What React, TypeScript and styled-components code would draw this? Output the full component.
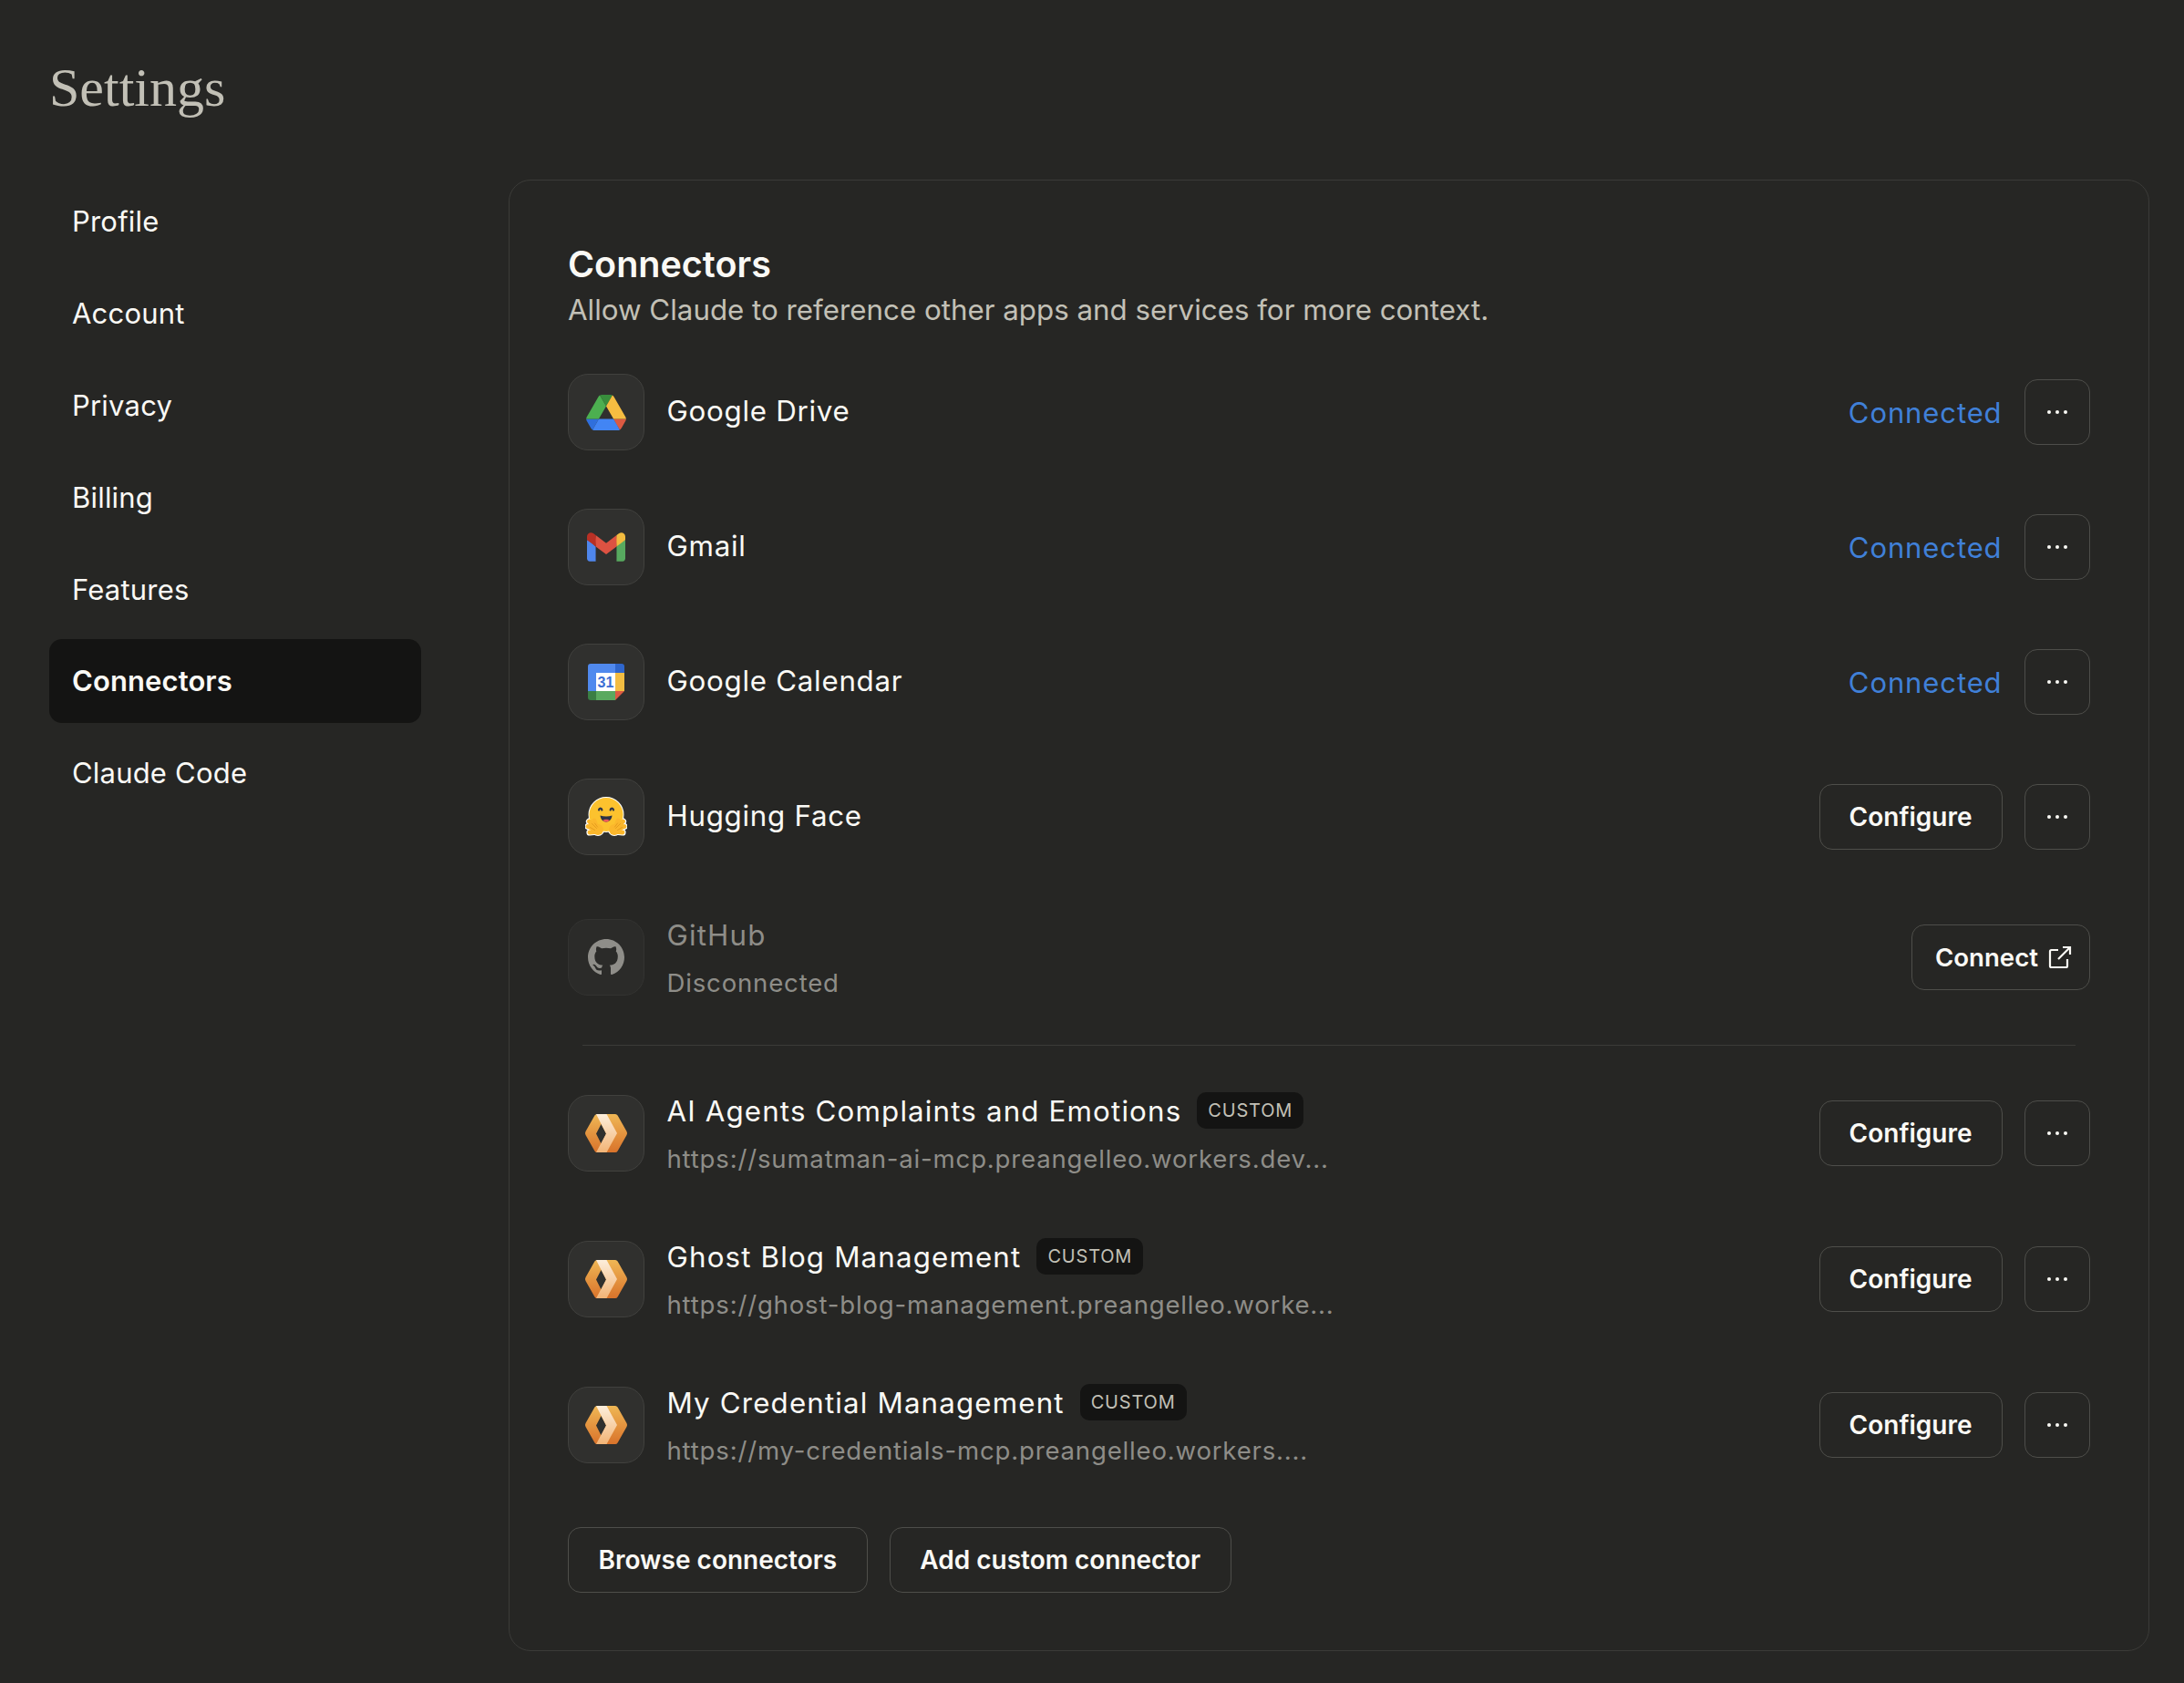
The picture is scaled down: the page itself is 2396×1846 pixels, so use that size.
import React from "react";
import styled, { createGlobalStyle } from "styled-components";

const Global = createGlobalStyle`
  html, body { margin: 0; padding: 0; background: #262624; }
  body { font-family: Inter, "Liberation Sans", sans-serif; color: #faf9f5; }
  * { box-sizing: border-box; }
`;

const Page = styled.div`
  width: 2396px;
  height: 1846px;
  background: #262624;
  padding: 56px 39px 0 54px;
  overflow: hidden;
`;
const Title = styled.h1`
  margin: 0;
  height: 80px;
  line-height: 80px;
  font-family: "Liberation Serif", serif;
  font-weight: 400;
  font-size: 60px;
  color: #c2c0b6;
`;
const Body = styled.div`
  display: flex;
  align-items: flex-start;
  margin-top: 61px;
  gap: 96px;
`;
const Sidebar = styled.nav`
  width: 408px;
  flex: none;
  display: flex;
  flex-direction: column;
  gap: 9px;
`;
const NavItem = styled.div<{ $active?: boolean }>`
  height: 91.8px;
  display: flex;
  align-items: center;
  padding-left: 25px;
  border-radius: 14px;
  font-size: 31px;
  letter-spacing: ${(p) => (p.$active ? "0.1px" : "0.2px")};
  font-weight: ${(p) => (p.$active ? 600 : 400)};
  background: ${(p) => (p.$active ? "#141413" : "transparent")};
  color: #faf9f5;
`;
const Panel = styled.section`
  width: 1800px;
  flex: none;
  border: 1.5px solid #3b3b38;
  border-radius: 24px;
  padding: 63px 64.5px 63px 64px;
  display: flex;
  flex-direction: column;
`;
const Heading = styled.h2`
  margin: 0;
  height: 56px;
  line-height: 58px;
  font-size: 39.5px;
  font-weight: 600;
  color: #faf9f5;
`;
const Sub = styled.p`
  margin: 0 0 47px;
  height: 46px;
  line-height: 46px;
  font-size: 31.3px;
  color: #c2c0b6;
`;
const List = styled.div`
  display: flex;
  flex-direction: column;
  gap: 64px;
`;
const Row = styled.div<{ $two?: boolean }>`
  display: flex;
  align-items: center;
  height: ${(p) => (p.$two ? 96 : 84)}px;
  gap: 24px;
`;
const IconBox = styled.div<{ $dim?: boolean }>`
  width: 84px;
  height: 84px;
  flex: none;
  border-radius: 22px;
  display: flex;
  align-items: center;
  justify-content: center;
  background: ${(p) => (p.$dim ? "#2b2b29" : "#30302e")};
  border: 1.5px solid ${(p) => (p.$dim ? "#333331" : "#41413e")};
`;
const Info = styled.div`
  flex: 1;
  min-width: 0;
  margin: 0 0 2px 0.5px;
  display: flex;
  flex-direction: column;
`;
const NameLine = styled.div`
  display: flex;
  align-items: center;
  gap: 17px;
  height: 46px;
  margin-top: 4.5px;
`;
const Name = styled.span<{ $dim?: boolean }>`
  font-size: 31.3px;
  letter-spacing: 0.72px;
  color: ${(p) => (p.$dim ? "#8e8d88" : "#faf9f5")};
  ${NameLine} & {
    letter-spacing: 1.15px;
  }
`;
const Tag = styled.span`
  height: 40px;
  margin-top: -2px;
  padding: 0 12px;
  display: inline-flex;
  align-items: center;
  border-radius: 10px;
  background: #141413;
  color: #c2c0b6;
  font-size: 20px;
  letter-spacing: 0.8px;
`;
const Detail = styled.div`
  height: 44px;
  margin-top: 7px;
  line-height: 44px;
  font-size: 27.6px;
  letter-spacing: 0.8px;
  color: #8e8d88;
  white-space: nowrap;
`;
const Status = styled.span`
  font-size: 31px;
  letter-spacing: 0.9px;
  color: #4080d8;
`;
const Button = styled.button`
  height: 72px;
  padding: 0 32px;
  background: transparent;
  border: 1.5px solid #4e4e4a;
  border-radius: 14px;
  color: #faf9f5;
  font-family: inherit;
  font-size: 28px;
  font-weight: 600;
  display: inline-flex;
  align-items: center;
  flex: none;
`;
const ConnectButton = styled(Button)`
  padding: 0 19px 0 24.5px;
  gap: 10.5px;
  font-size: 27.6px;
`;
const MoreButton = styled(Button)`
  width: 72px;
  padding: 0;
  justify-content: center;
`;
const Divider = styled.hr`
  margin: -16px 16px;
  height: 1px;
  border: none;
  background: #3b3b38;
`;
const Footer = styled.div`
  display: flex;
  gap: 24px;
  margin-top: 64px;
`;
const FooterButton = styled(Button)`
  padding: 0 32.5px;
`;

const Dots = () => (
  <svg width="24" height="6" viewBox="0 0 24 6" fill="#faf9f5">
    <circle cx="3" cy="3" r="2" />
    <circle cx="12" cy="3" r="2" />
    <circle cx="21" cy="3" r="2" />
  </svg>
);

const External = () => (
  <svg width="26" height="26" viewBox="0 0 26 26" fill="none" stroke="#faf9f5" strokeWidth="2.2">
    <path d="M11 5H3.500a1.500 1.500 0 0 0-1.500 1.500v16A1.500 1.500 0 0 0 3.500 24h16a1.500 1.500 0 0 0 1.500-1.500V15" />
    <path d="M11 15 24 2M16 2h8v8" />
  </svg>
);

const Drive = () => (
  <svg width="44" height="39" viewBox="0 0 87.3 78">
    <path d="m6.600 66.850 3.850 6.650c.8 1.400 1.950 2.500 3.300 3.300l13.750-23.800h-27.500c0 1.550.4 3.100 1.200 4.500z" fill="#2f6fdc" />
    <path d="m43.650 25-13.750-23.800c-1.350.8-2.500 1.900-3.300 3.300l-25.400 44a9.060 9.060 0 0 0 -1.200 4.500h27.500z" fill="#4caf50" />
    <path d="m73.550 76.800c1.350-.8 2.500-1.900 3.300-3.300l1.600-2.750 7.650-13.250c.8-1.400 1.200-2.950 1.200-4.500h-27.502l5.852 11.500z" fill="#dc5a42" />
    <path d="m43.650 25 13.750-23.800c-1.350-.8-2.900-1.200-4.500-1.200h-18.500c-1.600 0-3.150.45-4.500 1.200z" fill="#388e3c" />
    <path d="m59.800 53h-32.300l-13.750 23.800c1.350.8 2.900 1.200 4.500 1.200h50.800c1.600 0 3.150-.45 4.500-1.200z" fill="#4285f4" />
    <path d="m73.400 26.500-12.700-22c-.8-1.400-1.950-2.500-3.300-3.300l-13.750 23.800 16.150 28h27.450c0-1.550-.4-3.100-1.200-4.500z" fill="#f6bd41" />
  </svg>
);

const Gmail = () => (
  <svg width="42" height="32" viewBox="0 0 256 193">
    <path d="M58.182 192.050V93.140L27.507 65.077 0 49.504v125.091c0 9.658 7.825 17.455 17.455 17.455h40.727z" fill="#4f86ec" />
    <path d="M197.818 192.050h40.727c9.659 0 17.455-7.826 17.455-17.455V49.505l-31.156 17.837-27.026 25.798v98.910z" fill="#57a95f" />
    <path d="M58.182 93.140l-4.174-38.647 4.174-36.989L128 69.868l69.818-52.364 4.669 34.992-4.669 40.644L128 145.504z" fill="#dd5242" />
    <path d="M197.818 17.504V93.140L256 49.504V26.231c0-21.585-24.640-33.890-41.890-20.945l-16.292 12.218z" fill="#f2bb3f" />
    <path d="M0 49.504l26.759 20.070L58.182 93.140V17.504L41.890 5.286C24.610-7.660 0 4.646 0 26.230v23.273z" fill="#b93025" />
  </svg>
);

const Calendar = () => (
  <svg width="40" height="40" viewBox="0 0 40 40">
    <path d="M3 0h27v10H9v20H0V3a3 3 0 0 1 3-3z" fill="#5089ee" />
    <path d="M30 0h7a3 3 0 0 1 3 3v7H30z" fill="#2f66cc" />
    <rect x="30" y="10" width="10" height="20" fill="#f2bd42" />
    <path d="M30 30h10L30 40z" fill="#dc5a42" />
    <rect x="9" y="30" width="21" height="10" fill="#5aa95f" />
    <path d="M0 30h9v10H3a3 3 0 0 1-3-3z" fill="#3a7e44" />
    <rect x="9" y="10" width="21" height="20" fill="#fff" />
    <text x="19.500" y="26" textAnchor="middle" fontFamily="Liberation Sans, sans-serif" fontWeight="700" fontSize="16" fill="#3b6fd4">31</text>
  </svg>
);

const fingers = "M14 37 4.500 27M14 37 3 32.500M14 37 10 26M14 38 5 39";

const Hug = () => (
  <svg width="46" height="44" viewBox="0 0 46 44" strokeLinecap="round">
    <g stroke="#fff" fill="#fff">
      <circle cx="23" cy="19.500" r="18.700" strokeWidth="1.600" />
      <g fill="none" strokeWidth="7.200">
        <path d={fingers} />
        <path d={fingers} transform="translate(46 0) scale(-1 1)" />
      </g>
      <circle cx="14" cy="36" r="7" strokeWidth="0" />
      <circle cx="32" cy="36" r="7" strokeWidth="0" />
    </g>
    <circle cx="23" cy="19.500" r="18.500" fill="#fcc22e" />
    <g stroke="#fbb72c" fill="none" strokeWidth="4.800">
      <path d={fingers} />
      <path d={fingers} transform="translate(46 0) scale(-1 1)" />
    </g>
    <circle cx="14" cy="36" r="6" fill="#fbb72c" />
    <circle cx="32" cy="36" r="6" fill="#fbb72c" />
    <g fill="none" stroke="#e59c1e" strokeWidth="1">
      <path d="M7.500 29.500l5 5M5.500 33.500l5 3M10.500 29l3 4M38.500 29.500l-5 5M40.500 33.500l-5 3M35.500 29l-3 4" />
    </g>
    <g fill="none" stroke="#2d3346" strokeWidth="2.200">
      <path d="M15 14.500c.4-2.400 3-2.400 3.400 0M27.600 14.500c.4-2.400 3-2.400 3.400 0" />
    </g>
    <path d="M16.500 20.500c2 .7 4.300 1 6.500 1s4.500-.3 6.500-1c-.3 4-3 7-6.500 7s-6.200-3-6.500-7z" fill="#2d3346" />
    <path d="M19.500 25.500c1-1 6-1 7 0-.8 1.600-2 2-3.500 2s-2.700-.4-3.500-2z" fill="#ef5a5a" />
  </svg>
);

const Github = () => (
  <svg width="40" height="40" viewBox="0 0 16 16" fill="#8f8e89">
    <path d="M8 0C3.580 0 0 3.580 0 8c0 3.540 2.290 6.530 5.470 7.590.4.070.550-.170.550-.380 0-.190-.010-.820-.010-1.490-2.010.370-2.530-.490-2.690-.940-.090-.230-.480-.940-.820-1.130-.280-.150-.680-.520-.010-.530.630-.010 1.080.580 1.230.820.720 1.210 1.870.870 2.330.660.070-.520.280-.870.510-1.070-1.780-.2-3.640-.890-3.640-3.950 0-.870.310-1.590.820-2.150-.080-.2-.360-1.020.080-2.120 0 0 .670-.210 2.200.820.640-.180 1.320-.270 2-.270s1.360.090 2 .270c1.530-1.040 2.200-.820 2.200-.820.440 1.100.160 1.920.080 2.120.510.560.820 1.270.820 2.150 0 3.070-1.870 3.750-3.650 3.950.290.250.540.730.540 1.480 0 1.070-.010 1.930-.010 2.200 0 .210.150.460.550.380A8.013 8.013 0 0 0 16 8c0-4.420-3.580-8-8-8z" />
  </svg>
);

const Hex = ({ id }: { id: string }) => (
  <svg width="48" height="44" viewBox="0 0 48 44">
    <defs>
      <linearGradient id={`${id}a`} x1="0" y1="0" x2="0" y2="1">
        <stop offset="0" stopColor="#efb755" />
        <stop offset="1" stopColor="#d9732b" />
      </linearGradient>
      <linearGradient id={`${id}b`} x1="0" y1="0" x2="0" y2="1">
        <stop offset="0" stopColor="#fdeedb" />
        <stop offset="1" stopColor="#f2b476" />
      </linearGradient>
    </defs>
    <path
      fillRule="evenodd"
      d="M14 1h20a3 3 0 0 1 2.600 1.500L46.500 20a4 4 0 0 1 0 4L36.600 41.500A3 3 0 0 1 34 43H14a3 3 0 0 1-2.600-1.500L1.500 24a4 4 0 0 1 0-4L11.400 2.500A3 3 0 0 1 14 1zM18.500 12 13 22.500l5.500 11 5.500-11z"
      fill={`url(#${id}a)`}
    />
    <path d="M13 1h11.500L36 22 24.500 43H13l11-20.500z" fill={`url(#${id}b)`} />
  </svg>
);

const More = () => (
  <MoreButton aria-label="More">
    <Dots />
  </MoreButton>
);

const navItems = ["Profile", "Account", "Privacy", "Billing", "Features", "Connectors", "Claude Code"];
const customs = [
  { id: "a", name: "AI Agents Complaints and Emotions", url: "https://sumatman-ai-mcp.preangelleo.workers.dev..." },
  { id: "b", name: "Ghost Blog Management", url: "https://ghost-blog-management.preangelleo.worke..." },
  { id: "c", name: "My Credential Management", url: "https://my-credentials-mcp.preangelleo.workers...." },
];

export default function App() {
  return (
    <Page>
      <Global />
      <Title>Settings</Title>
      <Body>
        <Sidebar>
          {navItems.map((n) => (
            <NavItem key={n} $active={n === "Connectors"}>{n}</NavItem>
          ))}
        </Sidebar>
        <Panel>
          <Heading>Connectors</Heading>
          <Sub>Allow Claude to reference other apps and services for more context.</Sub>
          <List>
            <Row>
              <IconBox><Drive /></IconBox>
              <Info><Name>Google Drive</Name></Info>
              <Status>Connected</Status>
              <More />
            </Row>
            <Row>
              <IconBox><Gmail /></IconBox>
              <Info><Name>Gmail</Name></Info>
              <Status>Connected</Status>
              <More />
            </Row>
            <Row>
              <IconBox><Calendar /></IconBox>
              <Info><Name>Google Calendar</Name></Info>
              <Status>Connected</Status>
              <More />
            </Row>
            <Row>
              <IconBox><Hug /></IconBox>
              <Info><Name>Hugging Face</Name></Info>
              <Button>Configure</Button>
              <More />
            </Row>
            <Row $two>
              <IconBox $dim><Github /></IconBox>
              <Info>
                <NameLine><Name $dim>GitHub</Name></NameLine>
                <Detail>Disconnected</Detail>
              </Info>
              <ConnectButton>Connect <External /></ConnectButton>
            </Row>
            <Divider />
            {customs.map((c) => (
              <Row $two key={c.id}>
                <IconBox><Hex id={c.id} /></IconBox>
                <Info>
                  <NameLine>
                    <Name>{c.name}</Name>
                    <Tag>CUSTOM</Tag>
                  </NameLine>
                  <Detail>{c.url}</Detail>
                </Info>
                <Button>Configure</Button>
                <More />
              </Row>
            ))}
          </List>
          <Footer>
            <FooterButton>Browse connectors</FooterButton>
            <FooterButton>Add custom connector</FooterButton>
          </Footer>
        </Panel>
      </Body>
    </Page>
  );
}
